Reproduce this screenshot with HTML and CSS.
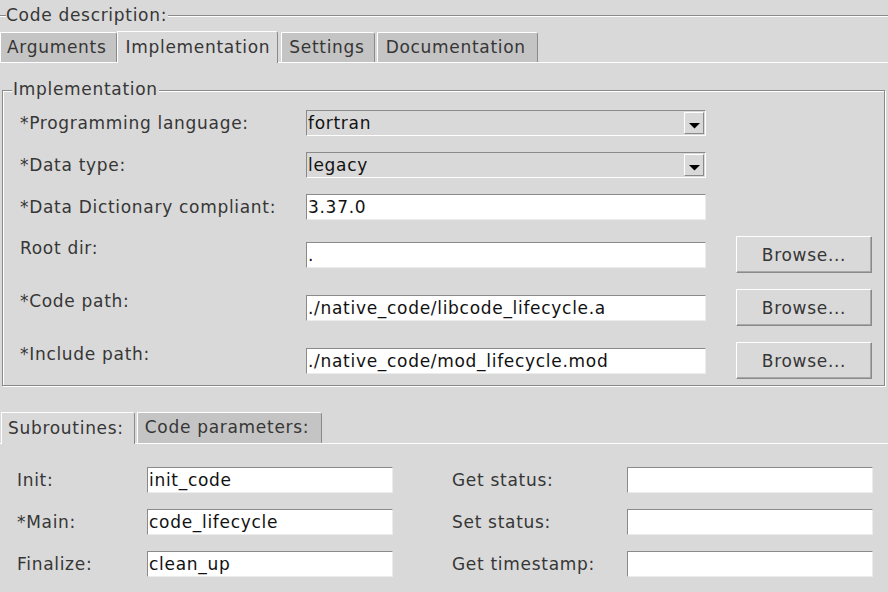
FILE: index.html
```html
<!DOCTYPE html>
<html>
<head>
<meta charset="utf-8">
<title>Code description</title>
<link rel="stylesheet" href="styles.css">
</head>
<body>
<div class="app">
  <div class="outer-head">
    <span class="ln short"></span>
    <span class="title">Code description:</span>
    <span class="ln grow"></span>
  </div>
  <div class="tabbar top-tabs">
    <div class="tab first">Arguments</div>
    <div class="tab sel">Implementation</div>
    <div class="tab gap">Settings</div>
    <div class="tab gap wide">Documentation</div>
  </div>
  <div class="impl-panel">
    <div class="group">
      <span class="legend">Implementation</span>
      <div class="form-grid">
        <div class="lbl">*Programming language:</div>
        <div class="combo"><span class="val">fortran</span><span class="arrow"><svg width="11" height="6" viewBox="0 0 11 6"><polygon points="0,0 11,0 5.5,5.5" fill="#000"/></svg></span></div>
        <div></div>

        <div class="lbl">*Data type:</div>
        <div class="combo"><span class="val">legacy</span><span class="arrow"><svg width="11" height="6" viewBox="0 0 11 6"><polygon points="0,0 11,0 5.5,5.5" fill="#000"/></svg></span></div>
        <div></div>

        <div class="lbl">*Data Dictionary compliant:</div>
        <div class="entry">3.37.0</div>
        <div></div>

        <div class="lbl up">Root dir:</div>
        <div class="entry mid">.</div>
        <button class="btn">Browse...</button>

        <div class="lbl up">*Code path:</div>
        <div class="entry mid">./native_code/libcode_lifecycle.a</div>
        <button class="btn">Browse...</button>

        <div class="lbl up">*Include path:</div>
        <div class="entry mid">./native_code/mod_lifecycle.mod</div>
        <button class="btn">Browse...</button>
      </div>
    </div>
  </div>
  <div class="tabbar bottom-tabs">
    <div class="tab sel">Subroutines:</div>
    <div class="tab gap wide">Code parameters:</div>
  </div>
  <div class="sub-panel">
    <div class="sub-grid">
      <div class="lbl">Init:</div>
      <div class="entry">init_code</div>
      <div></div>
      <div class="lbl">Get status:</div>
      <div class="entry"></div>

      <div class="lbl">*Main:</div>
      <div class="entry">code_lifecycle</div>
      <div></div>
      <div class="lbl">Set status:</div>
      <div class="entry"></div>

      <div class="lbl">Finalize:</div>
      <div class="entry">clean_up</div>
      <div></div>
      <div class="lbl">Get timestamp:</div>
      <div class="entry"></div>
    </div>
  </div>
</div>
</body>
</html>
```

FILE: styles.css
```css
* { box-sizing: border-box; }

html, body {
  margin: 0;
  padding: 0;
}

body {
  width: 888px;
  height: 592px;
  overflow: hidden;
  background: #d9d9d9;
  font-family: "DejaVu Sans", sans-serif;
  font-size: 17px;
  letter-spacing: 0.7px;
  color: #363636;
}

.app {
  width: 888px;
  height: 592px;
}

/* outer "Code description:" heading line */
.outer-head {
  display: flex;
  align-items: flex-start;
  height: 31px;
}

.outer-head .ln {
  margin-top: 15px;
  height: 2px;
  border-top: 1px solid #8a8a8a;
  border-bottom: 1px solid #ffffff;
}

.outer-head .ln.short { width: 6px; }
.outer-head .ln.grow { flex: 1; margin-left: 1px; }

.outer-head .title {
  line-height: 30px;
  white-space: nowrap;
}

/* tabs */
.tabbar {
  display: flex;
  align-items: flex-end;
  border-bottom: 1px solid #ffffff;
}

.tab {
  height: 30px;
  line-height: 28px;
  padding: 0 9px 0 7px;
  background: #c4c4c4;
  border-left: 1px solid #ffffff;
  border-top: 1px solid #ffffff;
  border-right: 1px solid #8a8a8a;
  border-top-right-radius: 3px;
  white-space: nowrap;
}

.tab.first { padding-left: 6px; }

.tab.gap { margin-left: 2px; }

.tab.wide { padding: 0 11px 0 8px; }

.tab.sel {
  height: 32px;
  line-height: 30px;
  padding: 0 7px 0 8px;
  margin-bottom: -1px;
  background: #d9d9d9;
  position: relative;
  z-index: 1;
}

.top-tabs .tab.sel + .tab.gap { margin-left: 3px; }

.bottom-tabs {
  padding-left: 1px;
}

.bottom-tabs .tab {
  height: 31px;
  line-height: 29px;
}

.bottom-tabs .tab.sel {
  height: 32px;
  line-height: 30px;
  padding: 0 10px 0 6px;
}

.bottom-tabs .tab.wide { padding: 0 12px 0 7px; }

/* implementation group */
.impl-panel {
  padding: 27px 3px 26px 2px;
}

.group {
  position: relative;
  border: 1px solid #8a8a8a;
  box-shadow: inset 1px 1px 0 #ffffff, 1px 1px 0 #ffffff;
  padding: 19px 12px 6px 17px;
}

.legend {
  position: absolute;
  top: -12px;
  left: 9px;
  padding: 0 1px;
  line-height: 20px;
  background: #d9d9d9;
  white-space: nowrap;
}

.form-grid {
  display: grid;
  grid-template-columns: 286px 400px 166px;
  grid-template-rows: 26px 26px 26px 37px 37px 37px;
  row-gap: 16px;
}

.lbl {
  align-self: center;
  white-space: nowrap;
}

.lbl.up {
  padding-bottom: 13px;
}

.entry {
  height: 26px;
  background: #ffffff;
  border: 1px solid;
  border-color: #8a8a8a #ececec #ececec #8a8a8a;
  color: #111;
  padding: 0 2px 0 1px;
  line-height: 24px;
  white-space: nowrap;
  overflow: hidden;
}

.entry.mid {
  align-self: center;
}

.combo {
  display: flex;
  align-items: center;
  height: 26px;
  border: 1px solid;
  border-color: #8a8a8a #ffffff #ffffff #8a8a8a;
  padding: 1px;
  color: #111;
}

.combo .val {
  flex: 1;
  line-height: 22px;
}

.combo .arrow {
  width: 20px;
  height: 22px;
  border: 1px solid;
  border-color: #ffffff #8a8a8a #8a8a8a #ffffff;
  display: flex;
  align-items: center;
  justify-content: center;
  padding-top: 6px;
}

.combo .arrow svg { display: block; }

.btn {
  justify-self: end;
  width: 136px;
  height: 37px;
  margin: 0;
  padding: 0;
  background: #d9d9d9;
  border: 1px solid;
  border-color: #ffffff #8a8a8a #8a8a8a #ffffff;
  box-shadow: inset -1px -1px 0 #a8a8a8;
  font: inherit;
  letter-spacing: inherit;
  color: #363636;
}

/* subroutines panel */
.sub-panel {
  padding: 23px 0 0 17px;
}

.sub-grid {
  display: grid;
  grid-template-columns: 130px 246px 59px 175px 246px;
  grid-auto-rows: 26px;
  row-gap: 16px;
}
```
